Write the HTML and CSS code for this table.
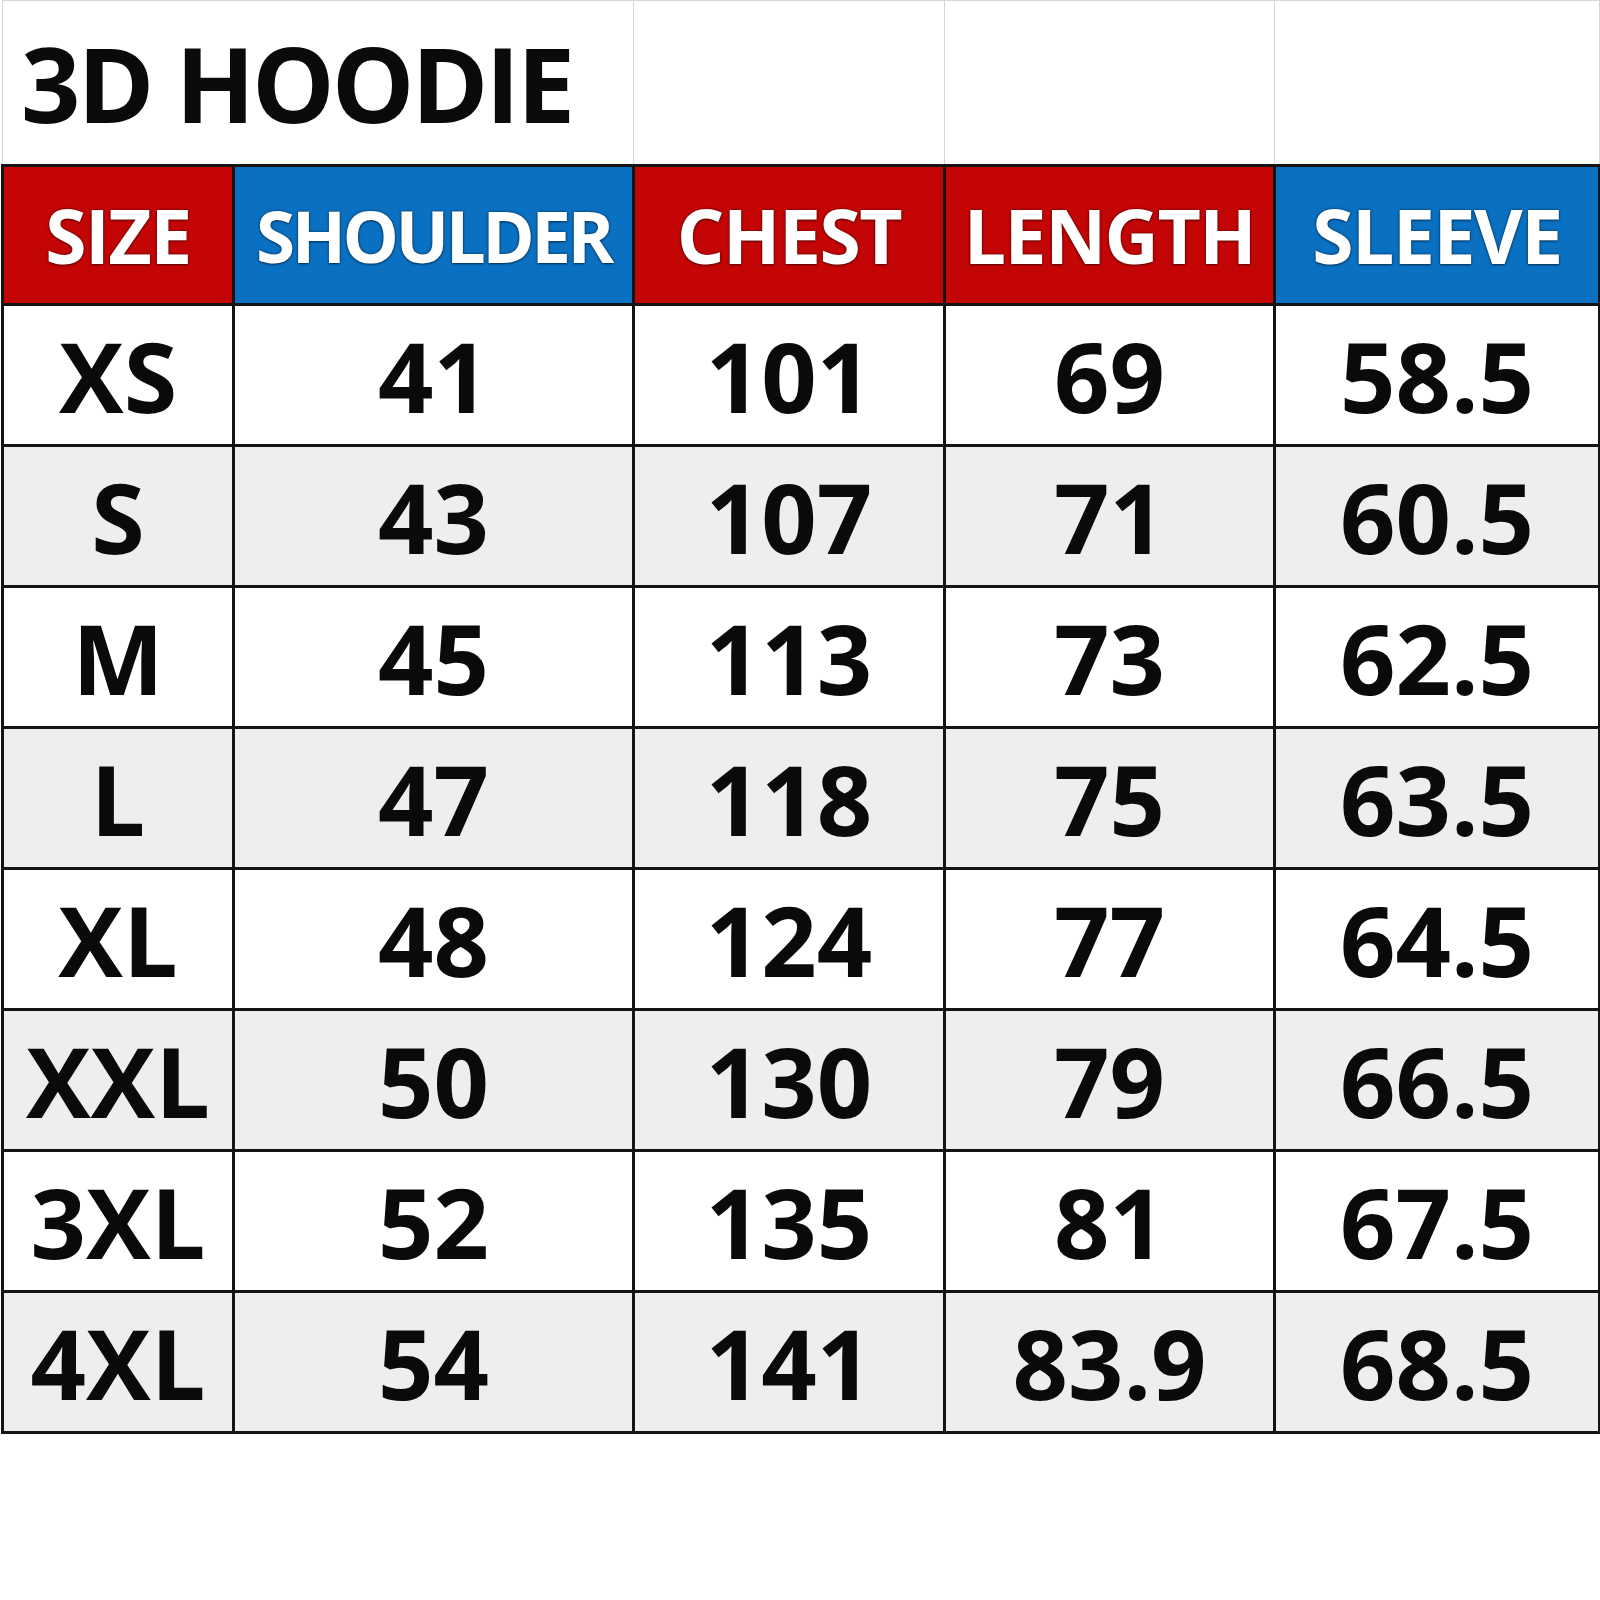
FILE: index.html
```html
<!DOCTYPE html>
<html lang="en">
<head>
<meta charset="utf-8">
<title>3D Hoodie Size Chart</title>
<link rel="stylesheet" href="styles.css">
</head>
<body>
<table class="chart">
  <colgroup>
    <col class="c-size">
    <col class="c-shoulder">
    <col class="c-chest">
    <col class="c-length">
    <col class="c-sleeve">
  </colgroup>
  <tr class="title-row">
    <td class="title" colspan="2">3D HOODIE</td>
    <td class="blank"></td>
    <td class="blank"></td>
    <td class="blank"></td>
  </tr>
  <tr class="head-row">
    <th class="red">SIZE</th>
    <th class="blue fit">SHOULDER</th>
    <th class="red">CHEST</th>
    <th class="red">LENGTH</th>
    <th class="blue">SLEEVE</th>
  </tr>
  <tr class="row">
    <td>XS</td><td>41</td><td>101</td><td>69</td><td>58.5</td>
  </tr>
  <tr class="row alt">
    <td>S</td><td>43</td><td>107</td><td>71</td><td>60.5</td>
  </tr>
  <tr class="row">
    <td>M</td><td>45</td><td>113</td><td>73</td><td>62.5</td>
  </tr>
  <tr class="row alt">
    <td>L</td><td>47</td><td>118</td><td>75</td><td>63.5</td>
  </tr>
  <tr class="row">
    <td>XL</td><td>48</td><td>124</td><td>77</td><td>64.5</td>
  </tr>
  <tr class="row alt">
    <td>XXL</td><td>50</td><td>130</td><td>79</td><td>66.5</td>
  </tr>
  <tr class="row">
    <td>3XL</td><td>52</td><td>135</td><td>81</td><td>67.5</td>
  </tr>
  <tr class="row alt">
    <td>4XL</td><td>54</td><td>141</td><td>83.9</td><td>68.5</td>
  </tr>
</table>
</body>
</html>
```

FILE: styles.css
```css
html, body {
  margin: 0;
  padding: 0;
  background: #ffffff;
}

body {
  font-family: "Open Sans", "Liberation Sans", sans-serif;
  font-weight: 700;
  color: #0a0a0a;
}

.chart {
  width: 1597px;
  margin-left: 1px;
  table-layout: fixed;
  border-collapse: collapse;
}

.c-size { width: 231px; }
.c-shoulder { width: 400px; }
.c-chest { width: 311px; }
.c-length { width: 330px; }
.c-sleeve { width: 325px; }

.title-row td {
  height: 163px;
  border: 1px solid #d6d6d6;
  background: #ffffff;
  padding: 0;
}

.title {
  font-size: 104px;
  letter-spacing: -3px;
  line-height: 1;
  padding-left: 18px !important;
  text-align: left;
  vertical-align: middle;
}

.head-row th {
  height: 136px;
  padding: 0;
  border: 3px solid #141414;
  color: #ffffff;
  font-size: 75px;
  font-weight: 700;
  letter-spacing: -1.5px;
  line-height: 1;
  text-align: center;
  vertical-align: middle;
  text-shadow: 0 0 3px rgba(0, 0, 0, 0.55), 0 1px 2px rgba(0, 0, 0, 0.4);
}

.head-row th.fit {
  font-size: 71px;
  letter-spacing: -3.5px;
}

.red { background: #c40505; }
.blue { background: #0a70c2; }

.row td {
  height: 138px;
  padding: 0;
  border: 3px solid #141414;
  background: #ffffff;
  font-size: 97px;
  line-height: 1;
  text-align: center;
  vertical-align: middle;
}

.row.alt td {
  background: #eeeeee;
}
```
